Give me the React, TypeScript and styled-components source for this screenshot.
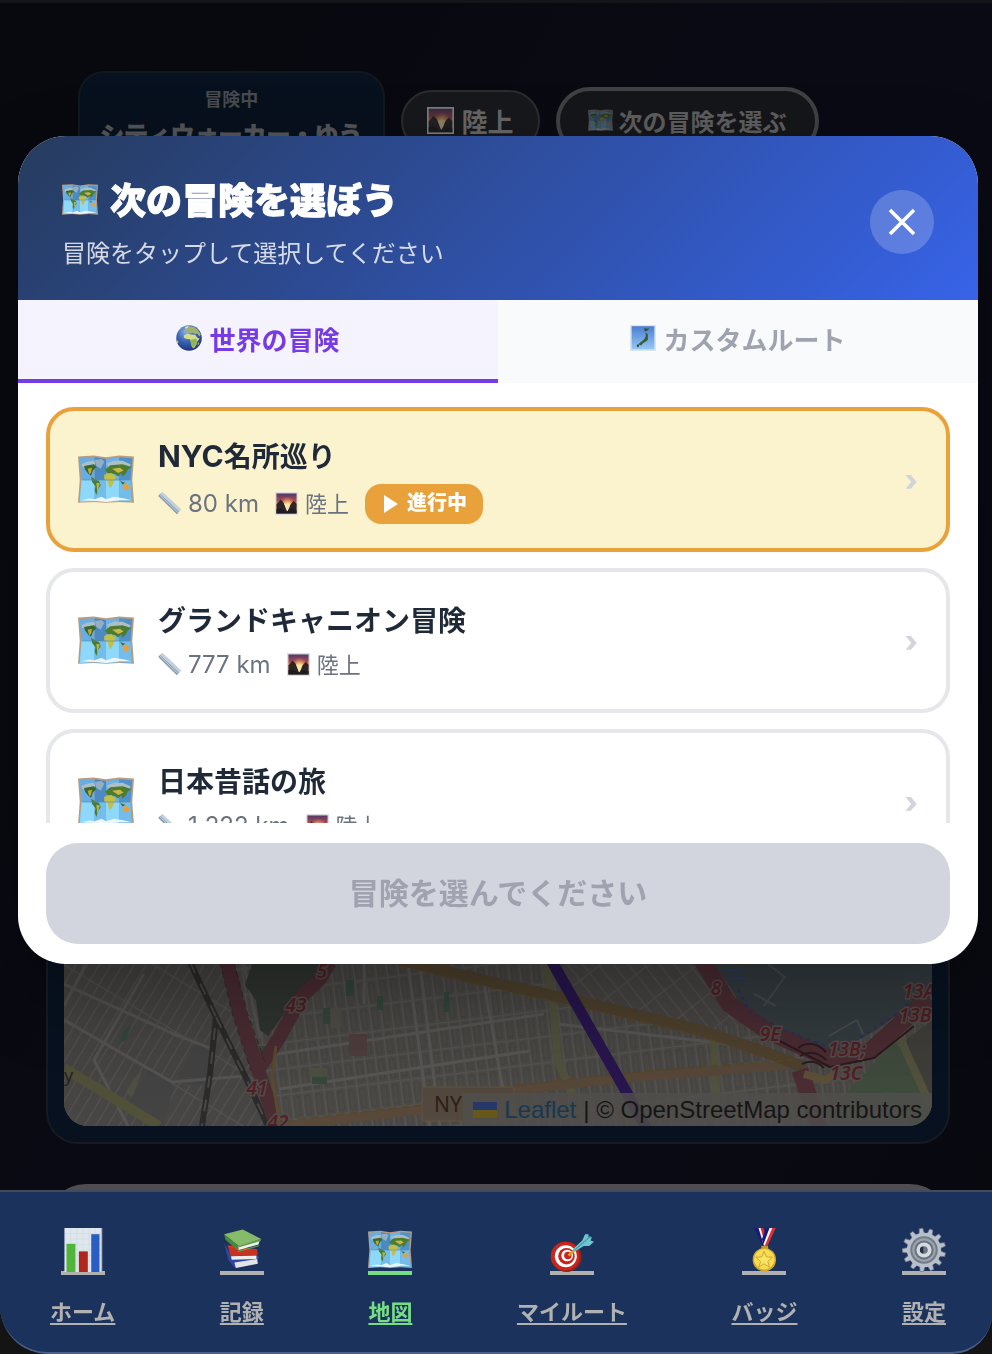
import React, { useState } from "react";
import styled, { createGlobalStyle } from "styled-components";

const jp = `"Noto Sans CJK JP", sans-serif`;

const GlobalStyle = createGlobalStyle`
  *, *::before, *::after { box-sizing: border-box; }
  html, body { margin: 0; background: #07080e; }
  body { font-family: ${jp}; overflow: hidden; }
  button { font-family: inherit; border: 0; margin: 0; padding: 0; background: none; cursor: pointer; }
  h1, h2, h3, p, ul { margin: 0; padding: 0; list-style: none; }
`;

/* ---------- page behind the dialog ---------- */

const Page = styled.div`
  height: 100vh;
  overflow: hidden;
  display: flex;
  flex-direction: column;
  border-top: 3px solid #13151a;
  background: linear-gradient(120deg, #08090e, #090a14 60%, #08090f);
`;

const StatusRow = styled.div`
  display: flex;
  align-items: center;
  gap: 16px;
  padding: 68px 78px 0;
`;

const AdventurerCard = styled.section`
  height: 100px;
  padding: 12px 20px;
  border: 2px solid #12181f;
  border-radius: 26px;
  background: linear-gradient(#07111f, #07101a);
  text-align: center;
  font-weight: 700;
  color: #525458;
`;

const AdventurerLabel = styled.p`
  font-size: 18px;
  line-height: 26px;
  color: #484a4d;
`;

const AdventurerName = styled.h2`
  font-size: 24px;
  line-height: 46px;
  white-space: nowrap;
  -webkit-text-stroke: 1px currentColor;
`;

const TerrainPill = styled.span`
  display: flex;
  align-items: center;
  gap: 8px;
  height: 62px;
  padding: 0 24px 2px;
  border: 2px solid #2c2c2f;
  border-radius: 31px;
  background: #17181b;
  color: #656566;
  font-size: 26px;
  font-weight: 700;
  white-space: nowrap;
  svg { opacity: 0.5; }
`;

const ChooseButton = styled.button`
  display: flex;
  align-items: center;
  gap: 6px;
  height: 68px;
  padding: 0 28px 2px;
  border: 4px solid #404042;
  border-radius: 34px;
  background: #15161a;
  color: #5d5d5e;
  font-size: 24px;
  font-weight: 700;
  white-space: nowrap;
  svg { opacity: 0.35; }
`;

const MapPanel = styled.section`
  flex: none;
  margin: 129px 42px 0 46px;
  padding: 16px;
  border: 2px solid #171b21;
  border-radius: 32px;
  background: #07111f;
`;

const MapView = styled.div`
  position: relative;
  display: flex;
  align-items: flex-end;
  height: 808px;
  overflow: hidden;
  border-radius: 24px;
  background: #3a3836;
`;

const MapDrawing = styled.svg`
  display: block;
  width: 100%;
  height: 162px;
`;

const Attribution = styled.p`
  position: absolute;
  right: 0;
  bottom: 0;
  display: flex;
  align-items: center;
  gap: 7px;
  padding: 0 10px;
  height: 33px;
  background: rgba(80, 78, 76, 0.82);
  color: #151515;
  font: 24px/33px "Liberation Sans", sans-serif;
  white-space: nowrap;
`;

const MapLink = styled.a`
  color: #17384f;
  text-decoration: none;
`;

const NextPanel = styled.div`
  flex: none;
  height: 140px;
  margin: 40px 42px 0 46px;
  border-top: 6px solid #514b52;
  border-radius: 40px;
  background: #505055;
`;

/* ---------- dialog ---------- */

const Overlay = styled.div`
  position: fixed;
  inset: 0;
  padding: 136px 14px 0 18px;
`;

const Dialog = styled.section`
  overflow: hidden;
  border-radius: 48px;
  background: #fff;
  box-shadow: 0 30px 80px rgba(0, 0, 0, 0.25);
`;

const DialogHeader = styled.header`
  display: flex;
  align-items: center;
  justify-content: space-between;
  padding: 38px 44px 30px;
  background: linear-gradient(135deg, #263b5d, #3763e8);
  color: #fff;
`;

const DialogTitle = styled.h1`
  display: flex;
  align-items: center;
  gap: 12px;
  padding-bottom: 4px;
  font-size: 36px;
  font-weight: 900;
  line-height: 48px;
  -webkit-text-stroke: 1px currentColor;
  svg { margin-top: 4px; }
`;

const DialogHint = styled.p`
  margin-top: 8px;
  font-size: 24px;
  line-height: 36px;
  color: rgba(255, 255, 255, 0.8);
`;

const CloseButton = styled.button`
  display: grid;
  place-items: center;
  width: 64px;
  height: 64px;
  border-radius: 50%;
  background: rgba(255, 255, 255, 0.2);
`;

const Tabs = styled.div`
  display: grid;
  grid-template-columns: 1fr 1fr;
`;

const Tab = styled.button<{ $active: boolean }>`
  display: flex;
  align-items: center;
  justify-content: center;
  gap: 7px;
  height: 83px;
  padding-bottom: 3px;
  border-bottom: 4px solid ${(p) => (p.$active ? "#763be4" : "#f9fafc")};
  background: ${(p) => (p.$active ? "#f5f3fe" : "#f9fafc")};
  color: ${(p) => (p.$active ? "#763be4" : "#9ea3af")};
  font-size: 26px;
  font-weight: 700;
`;

const AdventureList = styled.ul`
  display: flex;
  flex-direction: column;
  gap: 16px;
  max-height: 440px;
  padding: 24px 28px;
  overflow-y: auto;
  scrollbar-width: none;
`;

const AdventureCard = styled.button<{ $current: boolean }>`
  display: flex;
  align-items: center;
  gap: 24px;
  width: 100%;
  min-height: 145px;
  padding: 24px 28px;
  border: 4px solid ${(p) => (p.$current ? "#e9a23b" : "#e5e7eb")};
  border-radius: 28px;
  background: ${(p) => (p.$current ? "#fbf3cd" : "#fff")};
  text-align: left;
`;

const AdventureBody = styled.span`
  flex: 1;
  display: flex;
  flex-direction: column;
  gap: 10px;
`;

const AdventureName = styled.span`
  height: 38px;
  font-size: 28px;
  font-weight: 700;
  line-height: 38px;
  color: #1f2937;
`;

const LatinName = styled.span`
  font-family: Inter, sans-serif;
  font-size: 30px;
`;

const Meta = styled.span`
  display: flex;
  align-items: center;
  gap: 16px;
  min-height: 34px;
  font-size: 22px;
  color: #6b7280;
`;

const MetaItem = styled.span`
  display: flex;
  align-items: center;
  gap: 7px;
`;

const Distance = styled.span`
  font-family: Inter, sans-serif;
  font-size: 24px;
  line-height: 34px;
`;

const Terrain = styled.span`
  padding-bottom: 4px;
  line-height: 30px;
`;

const Badge = styled.span`
  display: flex;
  align-items: center;
  gap: 9px;
  height: 40px;
  padding: 0 16px 0 18px;
  border-radius: 16px;
  background: #e9a23b;
  color: #fff;
  font-size: 20px;
  font-weight: 900;
`;

const BadgeText = styled.span`
  padding-bottom: 4px;
  line-height: 36px;
`;

const Chevron = styled.span`
  font: 800 30px/30px Inter, sans-serif;
  color: #d1d5db;
`;

const DialogFooter = styled.footer`
  padding: 20px 28px;
`;

const ConfirmButton = styled.button`
  display: block;
  width: 100%;
  height: 101px;
  padding-bottom: 6px;
  border-radius: 32px;
  background: #d2d5dd;
  color: #9fa3b0;
  font-size: 30px;
  font-weight: 700;
`;

/* ---------- bottom navigation ---------- */

const NavBacking = styled.div`
  position: fixed;
  inset: auto 0 0 0;
  background: linear-gradient(transparent 40px, #141414 40px);
`;

const Nav = styled.nav`
  display: flex;
  justify-content: space-between;
  height: 164px;
  padding: 36px 46px 0 50px;
  border-top: 2px solid #444a57;
  border-bottom: 2px solid #4a5f86;
  border-radius: 0 0 40px 48px;
  background: #1b335c;
`;

const NavLink = styled.a<{ $active: boolean }>`
  display: flex;
  flex-direction: column;
  align-items: center;
  gap: 19px;
  color: ${(p) => (p.$active ? "#77dc86" : "#b1b1b1")};
  text-decoration: none;
`;

const NavIcon = styled.span`
  display: flex;
  border-bottom: 4px solid currentColor;
  svg { margin-bottom: -1px; }
`;

const NavLabel = styled.span`
  font-size: 22px;
  font-weight: 700;
  line-height: 32px;
  text-decoration: underline;
  text-decoration-thickness: 2px;
  text-underline-offset: 3px;
  text-decoration-skip-ink: none;
`;

/* ---------- pictograms ---------- */

type IconProps = { size: number };

const Svg = ({ size, children }: IconProps & { children: React.ReactNode }) => (
  <svg width={size} height={size} viewBox="0 0 64 64" aria-hidden="true">
    {children}
  </svg>
);

const WorldMapIcon = ({ size }: IconProps) => (
  <Svg size={size}>
    <path d="M0 5l18-1 14 2 15-2 17 1-2 27 2 26-17-1-15 1-14-1-18 1 2-26z" fill="#b89c80" />
    <path d="M2 7l17-1v50L2 57l2-25z" fill="#68aee4" />
    <path d="M19 6l13 2v49l-13-1z" fill="#4b8ac2" />
    <path d="M32 8l15-2v50l-15 1z" fill="#6cb2e6" />
    <path d="M47 6l15 1-2 25 2 25-15-1z" fill="#4f92cb" />
    <path d="M4 32h15v24L2 57zM32 32h15v24l-15 1z" fill="#8ed8fb" />
    <path d="M19 32h13v25l-13-1zM47 32h13l2 25-15-1z" fill="#74bdeb" />
    <path d="M4 14l6-3 8-1 2 3-3 3-12 1zM33 13l8-3 10 0 9 4-1 3-24 0z" fill="#aebfc6" />
    <path d="M19 9l8-1 3 3-4 8-5-3z" fill="#94aec4" />
    <path d="M7 16l11-2 3 3-4 4-2 6-3-2-4-5z" fill="#3c672b" />
    <path d="M11 19l5-1-1 5-2 3z" fill="#b7a93c" />
    <path d="M15 28l4 3 5 2 2 5-3 4-2 7-2-5 1-5-4-5z" fill="#4b7b2c" />
    <path d="M21 35l4 1-2 6-1 4z" fill="#bdb742" />
    <path d="M31 20l6-5 14-1 10 3-4 3-2 4-4 4-2-4-3 4-4-3-9-1z" fill="#4e7c2f" />
    <path d="M30 26l8-2 5 4-1 4-4 8-2 1-2-8-4-2z" fill="#c5bf45" />
    <path d="M39 19l9-1 4 3-6 3z" fill="#cbb748" />
    <path d="M47 31l3 3 4 1-3 2z" fill="#3c672b" />
    <path d="M51 38l5-2 3 4-2 4-5-1z" fill="#e5a13b" />
    <path d="M4 55l9-2 6 1 8-3 5 3 9-3 12 2 8 2-14 0-15 2-13-1z" fill="#eef5f8" />
    <path d="M5 32h54" stroke="#4d8dbd" strokeWidth="0.8" />
  </Svg>
);

const RulerIcon = ({ size }: IconProps) => (
  <Svg size={size}>
    <path d="M1 11L12 0l52 49-11 13z" fill="#a9bccd" />
    <path d="M1 11l5-6 51 50-4 7z" fill="#8b9db0" />
    <path d="M7 6l5-6 52 49-4 5z" fill="#c3d2df" />
    <path d="M5 8l50 49" stroke="#dbe6ee" strokeWidth="2" />
  </Svg>
);

const SunriseIcon = ({ size }: IconProps) => (
  <Svg size={size}>
    <defs>
      <linearGradient id="sky" x1="0" y1="0" x2="0" y2="1">
        <stop offset="0" stopColor="#533768" />
        <stop offset="0.35" stopColor="#a84a52" />
        <stop offset="0.6" stopColor="#f0913a" />
        <stop offset="1" stopColor="#fff0b0" />
      </linearGradient>
      <radialGradient id="glow" cx="0.55" cy="0.55" r="0.4">
        <stop offset="0" stopColor="#fff7b8" />
        <stop offset="1" stopColor="#f9a33c" stopOpacity="0" />
      </radialGradient>
    </defs>
    <path d="M0 0h64v64H0z" fill="#dcdfe4" />
    <path d="M4 4h56v56H4z" fill="url(#sky)" />
    <path d="M4 4h56v56H4z" fill="url(#glow)" />
    <path d="M4 34l6-6 5-7 7 6 5 9 7 16 7-14 5-7 6-7 8 9v27H4z" fill="#2c262b" />
    <path d="M25 31l9 4 9-4-3 12-6 12-5-12z" fill="#fae7a4" />
    <path d="M4 48l12-3 16 10 14-8 14 4v9H4z" fill="#1e1a20" />
  </Svg>
);

const GlobeIcon = ({ size }: IconProps) => (
  <Svg size={size}>
    <defs>
      <radialGradient id="sea" cx="0.4" cy="0.25" r="0.75">
        <stop offset="0" stopColor="#8fb5dd" />
        <stop offset="0.5" stopColor="#3c66b4" />
        <stop offset="1" stopColor="#1d3585" />
      </radialGradient>
    </defs>
    <circle cx="32" cy="32" r="31.5" fill="url(#sea)" />
    <path d="M23 11l8-8 14 2 9 7 7 11-3 5-6-7-5 2-5-4-8 1-3-4-7 1z" fill="#a3b268" />
    <path d="M20 25l9-4 8 3 10 0 5 7 6 2-6 8-2 8-6 8-5-3-2-14-3-5-10-1-5-4z" fill="#d6dc8b" />
    <path d="M34 37l16-4 2 8-4 9-6 6-4-6z" fill="#93b25a" />
    <path d="M1 37l5 3-1 6-3-3zM54 44l3-3-1 7-3 2z" fill="#d0bb4c" />
    <path d="M22 5l9-3-2 5-6 2z" fill="#d7e2e4" />
  </Svg>
);

const JapanIcon = ({ size }: IconProps) => (
  <Svg size={size}>
    <defs>
      <linearGradient id="jsea" x1="0" y1="0" x2="0" y2="1">
        <stop offset="0" stopColor="#4c7ed0" />
        <stop offset="1" stopColor="#93c8f8" />
      </linearGradient>
    </defs>
    <path d="M0 0h64v64H0z" fill="#dbe5e8" />
    <path d="M4 3h56v57H4z" fill="url(#jsea)" />
    <path d="M36 7l5 2 6-1-3 5-7 3-2-4z" fill="#35512d" />
    <path d="M38 18l6 5 0 13-4 4-7 4-8 6-4-3 8-7 6-5 4-8z" fill="#3e5b2f" />
    <path d="M17 48l6 0-2 7-4-1zM25 47l5-1-3 5z" fill="#35512d" />
  </Svg>
);

const ChartIcon = ({ size }: IconProps) => (
  <Svg size={size}>
    <path d="M5 0h54v64H5z" fill="#dfe7ee" />
    <path d="M6 8h52M6 16h52M6 24h52M6 32h52M6 40h52M6 48h52M14 0v62M23 0v62M32 0v62M41 0v62M50 0v62" stroke="#d0dae3" />
    <path d="M8 23h13v41H8z" fill="#51b53b" />
    <path d="M26 34h13v30H26z" fill="#b0261c" />
    <path d="M44 9h12v55H44z" fill="#2a5dc4" />
    <path d="M59 0v64" stroke="#a8b7c4" strokeWidth="2" />
  </Svg>
);

const BooksIcon = ({ size }: IconProps) => (
  <Svg size={size}>
    <path d="M6 22l6 24 10 12-2-12z" fill="#31479d" />
    <path d="M18 46l38-6 1 3-3 4 2 4-33 7-7-6z" fill="#2f45a5" />
    <path d="M21 50l33-5 1 7-32 6z" fill="#e3e4e8" />
    <path d="M11 25l43 6 0 7-38 2z" fill="#d93a2a" />
    <path d="M12 28l4 13 39-2-1-7z" fill="#c93124" />
    <path d="M16 41l37-1v5l-36 1z" fill="#ececec" />
    <path d="M6 9L33 2l27 14-33 10z" fill="#86bb6a" />
    <path d="M6 9l21 17-1 7L8 17z" fill="#4c883c" />
    <path d="M27 26l31-9-2 7-29 8z" fill="#eef1ec" />
    <path d="M27 26l33-10-1 3-31 9zM26 33l30-8 2 1-31 9z" fill="#5e9a49" />
  </Svg>
);

const DartIcon = ({ size }: IconProps) => (
  <Svg size={size}>
    <ellipse cx="24" cy="42" rx="22" ry="22" fill="#94201a" />
    <ellipse cx="22" cy="41" rx="21" ry="21" fill="#c8261d" />
    <ellipse cx="23" cy="41" rx="16" ry="16" fill="#fff" />
    <ellipse cx="24" cy="41" rx="12" ry="12" fill="#c8261d" />
    <ellipse cx="25" cy="40" rx="8.5" ry="8.5" fill="#fff" />
    <ellipse cx="26" cy="40" rx="5.5" ry="5.5" fill="#c8261d" />
    <path d="M27 40l9-8" stroke="#d99f2f" strokeWidth="4" />
    <path d="M33 31l14-13 4-9 5 0 0 5 5-1-2 5 5 2-7 6-8 0-14 9z" fill="#6fc6cf" />
    <path d="M36 32l23-20" stroke="#3f9fac" strokeWidth="1.5" />
  </Svg>
);

const MedalIcon = ({ size }: IconProps) => (
  <Svg size={size}>
    <path d="M18 0h8l9 26h-5z" fill="#171a77" />
    <path d="M24 0h4l6 24-2 2z" fill="#f4f4f4" />
    <path d="M27 0h4l3 10-2 7z" fill="#d72a2e" />
    <path d="M49 0h-6l-11 26h5z" fill="#dd3137" />
    <path d="M44 0h-5l-8 22 2 4z" fill="#f4f4f4" />
    <path d="M40 0h-5l-6 16 2 8z" fill="#171a77" />
    <path d="M28 26h10v5H28z" fill="#c69530" />
    <circle cx="32.500" cy="46" r="17" fill="#d3a52c" />
    <circle cx="32.500" cy="45.500" r="15" fill="#f7dc51" />
    <path d="M32 34l3.500 8 9 .5-7 6 2.500 8.500-8-5-7.500 5 2.500-8.500-7-6 9-.5z" fill="#f9e468" stroke="#d1a32d" strokeWidth="1.400" />
  </Svg>
);

const GearIcon = ({ size }: IconProps) => (
  <Svg size={size}>
    {Array.from({ length: 13 }, (_, i) => (
      <path key={i} d="M28 9l1.500-8.500h5L36 9z" fill="#b9c2cc" stroke="#6c7580" transform={`rotate(${(i * 360) / 13 - 8} 32 32)`} />
    ))}
    <circle cx="32" cy="32" r="25" fill="#b7c0ca" />
    <circle cx="32" cy="32" r="20" fill="#737c88" />
    <circle cx="32" cy="32" r="17" fill="#9aa3ae" />
    <circle cx="32" cy="32" r="14" fill="#697380" />
    <circle cx="32" cy="32" r="11" fill="#d3dae0" />
    <circle cx="32" cy="32" r="5.500" fill="#6b7683" />
    <path d="M31 27a5 5 0 000 10z" fill="#273040" />
  </Svg>
);

/* ---------- street map ---------- */

const roadLabels: [number, number, string][] = [
  [258, 14, "5"], [232, 48, "43"], [193, 131, "41"], [214, 165, "42"],
  [652, 31, "8"], [706, 77, "9E"], [783, 92, "13B;"], [782, 116, "13C"],
  [855, 34, "13A"], [851, 58, "13B"],
];

const StreetMap = () => (
  <MapDrawing viewBox="0 0 868 162" preserveAspectRatio="xMidYMax slice" aria-label="地図">
    <defs>
      <pattern id="blocksA" width="10" height="46" patternUnits="userSpaceOnUse" patternTransform="rotate(31)">
        <path d="M0 0h10v46H0z" fill="#484644" />
        <path d="M0 0v46M0 0h10" stroke="#545352" strokeWidth="2.500" />
      </pattern>
      <pattern id="blocksB" width="11" height="26" patternUnits="userSpaceOnUse" patternTransform="rotate(-7)">
        <path d="M0 0h11v26H0z" fill="#4d4b48" />
        <path d="M0 0v26M0 0h11" stroke="#575654" strokeWidth="2.500" />
        <path d="M3 4h5v19H3z" fill="none" stroke="#444240" />
      </pattern>
      <pattern id="blocksC" width="12" height="30" patternUnits="userSpaceOnUse" patternTransform="rotate(-38)">
        <path d="M0 0h12v30H0z" fill="#4a4745" />
        <path d="M0 0v30M0 0h12" stroke="#565452" strokeWidth="2.500" />
      </pattern>
      <linearGradient id="shade" x1="0" y1="0" x2="0" y2="1">
        <stop offset="0" stopColor="#000" stopOpacity="0.12" />
        <stop offset="1" stopColor="#000" stopOpacity="0" />
      </linearGradient>
    </defs>
    <path d="M0 0h868v162H0z" fill="url(#blocksB)" />
    <path d="M0 0h170l40 162H0z" fill="url(#blocksA)" />
    <path d="M485 0h155l40 60-60 5-120-25z" fill="url(#blocksC)" />
    <path d="M134 78l14 3-4 40-18 0-12-8zM86 104l20 12 4 8-12 38-36-18z" fill="#444445" />
    <path d="M0 20l110 50 36 14M22 0l-22 42M80 10L30 96l34 66M0 56l108 62 72-6M180 0l16 74" fill="none" stroke="#565554" strokeWidth="3" />
    <path d="M200 92l280-42M215 125l250-38M300 0v40M344 0l22 162M356 0l20 162M420 20l20 110M494 60l170 20" fill="none" stroke="#595856" strokeWidth="3" />
    <path d="M188 0h76l-28 28-32 44-8-6-4-30-11-15z" fill="#313631" />
    <path d="M60 66l8-6-6 16-8 4zM259 44h7v16h-7zM282 16h8v16h-8zM313 32h6v14h-6zM380 28h5v20h-5zM192 82h13l-8 12zM248 112h15v8h-15z" fill="#35493d" />
    <path d="M267 44h10v20h-10zM246 104h17v9h-17zM62 128l8-14 8-6-10 26z" fill="#4f5145" />
    <path d="M285 70h18v22h-18z" fill="#513f3f" />
    <path d="M650 0h218v26l-56 40-46 26-60-26-26-20-16-26z" fill="#353d41" />
    <path d="M690 30l22 12M700 42l20-28M704 0l18 14M765 72l28-16 6 14" stroke="#494d4f" strokeWidth="2" fill="none" />
    <path d="M662 6h16M668 14h14" stroke="#28406a" strokeWidth="2" />
    <path d="M760 162l30-42 40-42 14 12 24 50v22z" fill="#404c3e" />
    <path d="M842 76l26-20v84l-16-30z" fill="#413f3a" />
    <circle cx="826" cy="136" r="10" fill="#3b5144" />
    <g fill="none" strokeLinejoin="round">
      <path d="M0 104l95 58" stroke="#525239" strokeWidth="10" />
      <path d="M482 0l8 50 4 48 16 34M649 68l5 94M834 70l32 70" stroke="#53533f" strokeWidth="8" />
      <path d="M221 162l135-16 99-20 116-13 157-12" stroke="#58493a" strokeWidth="9" />
      <path d="M336-4l92 22 108 24 100 24 65 22 39 15" stroke="#50432f" strokeWidth="11" />
      <path d="M221 157l135-16 99-20 116-13 157-12M336 2l92 22 108 24 100 24 65 22" stroke="#5b4727" strokeWidth="1.500" strokeDasharray="8 5" />
      <path d="M126-2l26 55-6 57-8 52M152 53l29 59 23 50" stroke="#2b2b2b" strokeWidth="6" />
      <path d="M126-2l26 55-6 57-8 52M152 53l29 59 23 50" stroke="#494948" strokeWidth="2" strokeDasharray="12 12" />
      <path d="M163-2l13 52 18 55 18 57M266-2l-11 18-17 16-23 42-21 32" stroke="#4c2d34" strokeWidth="14" />
      <path d="M156-2l13 54 18 55M170-2l13 50 18 50" stroke="#39262b" strokeDasharray="6 4" />
      <path d="M212 82l-4 30 8 50" stroke="#5d4a30" strokeWidth="3" />
      <path d="M638-4l27 44 40 28 61 27 40-8 62-56M736 106l20 60" stroke="#4c2d34" strokeWidth="17" />
      <path d="M674 26l12 22 30 16 34 14 24 8M790 78l40-26 26-22" stroke="#2b2f62" strokeWidth="2" strokeDasharray="3 5" />
      <path d="M712 75l54 28 44-9 40-32" stroke="#2b1b1e" strokeWidth="2" />
      <path d="M734 84q14-10 28 4M736 92q14-8 26 4M738 100q12-6 22 4" stroke="#2b1b1e" strokeWidth="2" />
      <path d="M740 110l22 6 10-8" stroke="#5f5038" strokeWidth="8" />
      <path d="M487-4l76 133 20 36" stroke="#291650" strokeWidth="11" />
    </g>
    <rect x="358" y="123" width="92" height="34" rx="2" fill="#54493f" stroke="#655341" />
    <text x="370" y="148" fontFamily="Noto Sans, sans-serif" fontSize="21" fill="#2b2117">NY</text>
    <text x="0" y="118" fontFamily="Noto Sans, sans-serif" fontSize="18" fill="#25251c">y</text>
    <g fontFamily="Noto Sans, sans-serif" fontSize="19" fontStyle="italic" fontWeight="600" fill="#541f23" stroke="#544d4d" strokeWidth="3" paintOrder="stroke" textAnchor="middle">
      {roadLabels.map(([x, y, label]) => (
        <text key={label + x} x={x} y={y}>{label}</text>
      ))}
    </g>
    <path d="M0 0h868v162H0z" fill="url(#shade)" />
  </MapDrawing>
);

/* ---------- data ---------- */

const adventures = [
  { id: "nyc", latin: "NYC", name: "名所巡り", distance: "80 km", current: true },
  { id: "canyon", latin: "", name: "グランドキャニオン冒険", distance: "777 km", current: false },
  { id: "japan", latin: "", name: "日本昔話の旅", distance: "1,222 km", current: false },
];

const navItems = [
  { label: "ホーム", Icon: ChartIcon },
  { label: "記録", Icon: BooksIcon },
  { label: "地図", Icon: WorldMapIcon },
  { label: "マイルート", Icon: DartIcon },
  { label: "バッジ", Icon: MedalIcon },
  { label: "設定", Icon: GearIcon },
];

export default function App() {
  const [tab, setTab] = useState("world");

  return (
    <>
      <GlobalStyle />
      <Page>
        <StatusRow>
          <AdventurerCard>
            <AdventurerLabel>冒険中</AdventurerLabel>
            <AdventurerName>シティウォーカー・ゆう</AdventurerName>
          </AdventurerCard>
          <TerrainPill>
            <SunriseIcon size={27} />
            陸上
          </TerrainPill>
          <ChooseButton type="button">
            <WorldMapIcon size={25} />
            次の冒険を選ぶ
          </ChooseButton>
        </StatusRow>
        <MapPanel>
          <MapView>
            <StreetMap />
            <Attribution>
              <svg width="24" height="16" viewBox="0 0 24 16" aria-hidden="true">
                <path d="M0 0h24v8H0z" fill="#26376a" />
                <path d="M0 8h24v8H0z" fill="#66581a" />
              </svg>
              <MapLink href="#leaflet">Leaflet</MapLink>
              <span>| © OpenStreetMap contributors</span>
            </Attribution>
          </MapView>
        </MapPanel>
        <NextPanel />
      </Page>

      <Overlay>
        <Dialog role="dialog" aria-modal="true" aria-labelledby="dialog-title">
          <DialogHeader>
            <div>
              <DialogTitle id="dialog-title">
                <WorldMapIcon size={36} />
                次の冒険を選ぼう
              </DialogTitle>
              <DialogHint>冒険をタップして選択してください</DialogHint>
            </div>
            <CloseButton type="button" aria-label="閉じる">
              <svg width="28" height="28" viewBox="0 0 28 28" aria-hidden="true">
                <path d="M2 2l24 24M26 2L2 26" stroke="#fff" strokeWidth="3.600" />
              </svg>
            </CloseButton>
          </DialogHeader>
          <Tabs role="tablist">
            <Tab type="button" role="tab" aria-selected={tab === "world"} $active={tab === "world"} onClick={() => setTab("world")}>
              <GlobeIcon size={26} />
              世界の冒険
            </Tab>
            <Tab type="button" role="tab" aria-selected={tab === "custom"} $active={tab === "custom"} onClick={() => setTab("custom")}>
              <JapanIcon size={26} />
              カスタムルート
            </Tab>
          </Tabs>
          <AdventureList>
            {adventures.map((a) => (
              <li key={a.id}>
                <AdventureCard type="button" $current={a.current}>
                  <WorldMapIcon size={56} />
                  <AdventureBody>
                    <AdventureName>
                      {a.latin && <LatinName>{a.latin}</LatinName>}
                      {a.name}
                    </AdventureName>
                    <Meta>
                      <MetaItem>
                        <RulerIcon size={23} />
                        <Distance>{a.distance}</Distance>
                      </MetaItem>
                      <MetaItem>
                        <SunriseIcon size={23} />
                        <Terrain>陸上</Terrain>
                      </MetaItem>
                      {a.current && (
                        <Badge>
                          <svg width="15" height="20" viewBox="0 0 15 20" aria-hidden="true">
                            <path d="M1 1l14 9-14 9z" fill="#fff" />
                          </svg>
                          <BadgeText>進行中</BadgeText>
                        </Badge>
                      )}
                    </Meta>
                  </AdventureBody>
                  <Chevron>›</Chevron>
                </AdventureCard>
              </li>
            ))}
          </AdventureList>
          <DialogFooter>
            <ConfirmButton type="button" disabled>冒険を選んでください</ConfirmButton>
          </DialogFooter>
        </Dialog>
      </Overlay>

      <NavBacking>
        <Nav>
          {navItems.map(({ label, Icon }) => (
            <NavLink key={label} href={"#" + label} $active={label === "地図"}>
              <NavIcon>
                <Icon size={44} />
              </NavIcon>
              <NavLabel>{label}</NavLabel>
            </NavLink>
          ))}
        </Nav>
      </NavBacking>
    </>
  );
}
